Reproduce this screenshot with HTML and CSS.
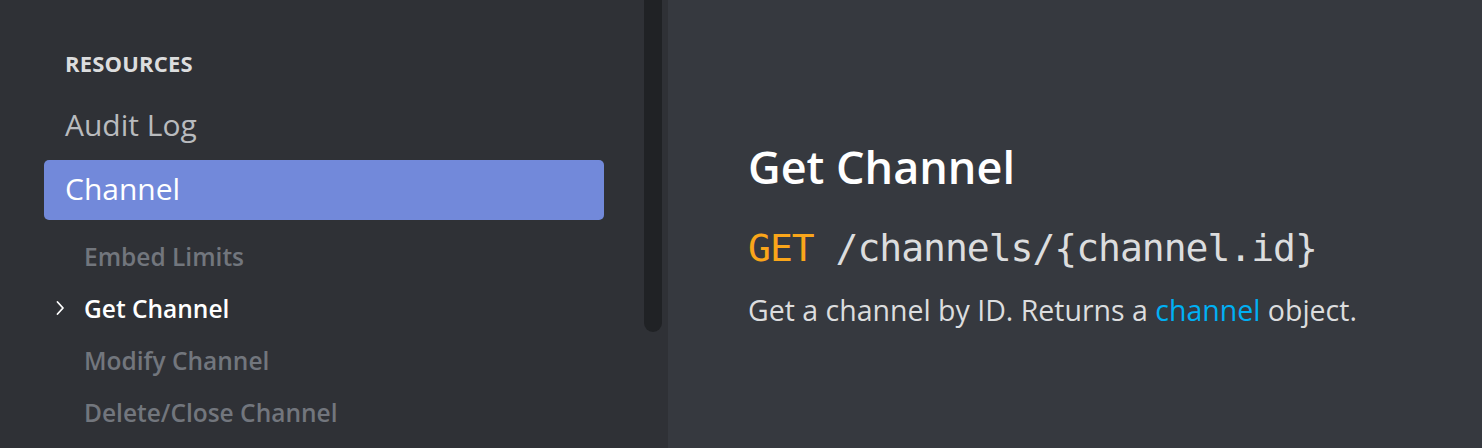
FILE: index.html
```html
<!DOCTYPE html>
<html lang="en">
<head>
<meta charset="utf-8">
<title>Get Channel</title>
<link rel="stylesheet" href="styles.css">
</head>
<body>
<div class="app">
  <aside class="sidebar">
    <nav class="nav">
      <div class="section-title">RESOURCES</div>
      <a class="item">Audit Log</a>
      <a class="item item-active">Channel</a>
      <ul class="subitems">
        <li class="subitem">Embed Limits</li>
        <li class="subitem subitem-current"><svg class="chevron" width="10" height="16" viewBox="0 0 10 16"><polyline points="2.5,2 8,8 2.5,14" fill="none" stroke="#ffffff" stroke-width="1.8" stroke-linecap="round" stroke-linejoin="round"/></svg>Get Channel</li>
        <li class="subitem">Modify Channel</li>
        <li class="subitem">Delete/Close Channel</li>
      </ul>
    </nav>
    <div class="scrollbar"></div>
  </aside>
  <main class="content">
    <h1 class="title">Get Channel</h1>
    <div class="route"><span class="method">GET</span> /channels/{channel.id}</div>
    <p class="desc">Get a channel by ID. Returns a <a class="link">channel</a> object.</p>
  </main>
</div>
</body>
</html>
```

FILE: styles.css
```css
html, body {
  margin: 0;
  padding: 0;
  height: 448px;
  overflow: hidden;
  background: #36393f;
}
.app {
  display: flex;
  height: 448px;
  font-family: "Open Sans", "Noto Sans", sans-serif;
}
.sidebar {
  width: 668px;
  flex: none;
  background: #2f3136;
  display: flex;
  align-items: flex-start;
}
.nav {
  width: 560px;
  padding: 51px 0 0 44px;
  flex: none;
}
.scrollbar {
  width: 18px;
  height: 332px;
  margin-left: 40px;
  background: #202225;
  border-radius: 0 0 9px 9px;
  flex: none;
}
.section-title {
  font-size: 22px;
  line-height: 24px;
  font-weight: 700;
  color: #dcddde;
  padding-left: 21px;
  letter-spacing: 0.2px;
  margin-bottom: 22px;
}
.item {
  display: block;
  height: 60px;
  line-height: 56px;
  box-sizing: border-box;
  padding: 0 0 4px 21px;
  font-size: 30px;
  color: #b9bbbe;
  border-radius: 5px;
  margin-bottom: 3px;
}
.item-active {
  background: #7289da;
  color: #ffffff;
  padding-bottom: 3px;
  line-height: 57px;
}
.subitems {
  list-style: none;
  margin: 10px 0 0 0;
  padding: 0;
}
.subitem {
  position: relative;
  height: 52px;
  line-height: 53px;
  padding-left: 40px;
  font-size: 24.5px;
  font-weight: 600;
  color: #72767d;
}
.subitem-current {
  color: #ffffff;
}
.chevron {
  position: absolute;
  left: 11px;
  top: 18px;
}
.content {
  flex: 1;
  padding: 141px 0 0 80px;
}
.title {
  margin: 0 0 31px 0;
  font-size: 45px;
  line-height: 52px;
  font-weight: 600;
  color: #ffffff;
}
.route {
  font-family: "DejaVu Sans Mono", "Liberation Mono", monospace;
  font-size: 38px;
  line-height: 48px;
  letter-spacing: -1px;
  color: #dcddde;
  margin-bottom: 20px;
}
.method {
  color: #faa61a;
}
.desc {
  margin: 0;
  font-size: 28.5px;
  line-height: 36px;
  color: #dcddde;
}
.link {
  color: #00b0f4;
}
```
